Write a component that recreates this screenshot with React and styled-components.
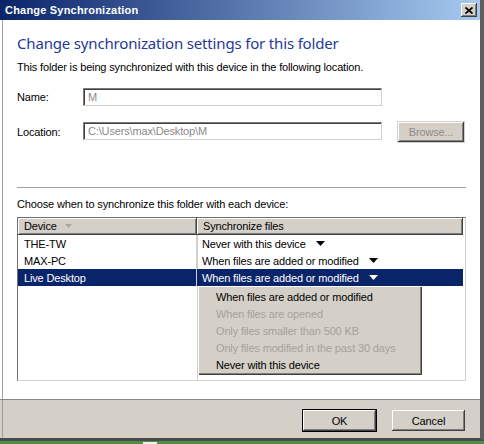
import React from 'react';
import styled, { createGlobalStyle } from 'styled-components';

const UI = `"Liberation Sans", Arial, sans-serif`;

const Global = createGlobalStyle`
  html, body { margin: 0; padding: 0; width: 484px; height: 444px; overflow: hidden; background: #4d8f45; }
  #root { width: 484px; height: 444px; }
  * { box-sizing: border-box; }
`;

const Desktop = styled.div`
  display: flex;
  flex-direction: column;
  width: 484px;
  height: 444px;
  background: #4d8f45;
`;

const Window = styled.div`
  display: flex;
  flex-direction: column;
  width: 484px;
  height: 441px;
  border-right: 4px solid #5e5e5e;
  border-bottom: 3px solid #4a4a4a;
  font-family: ${UI};
  font-size: 11px;
  letter-spacing: -0.15px;
  color: #000;
`;

const TitleBar = styled.div`
  height: 20px;
  flex: none;
  display: flex;
  align-items: center;
  justify-content: space-between;
  padding: 0 3px 0 5px;
  background: linear-gradient(to right, #0a246a, #a6caf0);
`;

const TitleText = styled.span`
  color: #fff;
  font-weight: bold;
  font-size: 11px;
  letter-spacing: 0.2px;
`;

const CloseButton = styled.div`
  width: 16px;
  height: 14px;
  background: #d4d0c8;
  display: flex;
  align-items: center;
  justify-content: center;
  box-shadow: inset -1px -1px 0 #404040, inset 1px 1px 0 #fff, inset -2px -2px 0 #808080;
`;

const Body = styled.div`
  flex: 1;
  display: flex;
  flex-direction: column;
  padding: 13px 14px 0 17px;
  background: linear-gradient(#a0a0a0, #a0a0a0) 2px 0 / 1px 100% no-repeat, #fff;
  position: relative;
`;

const Heading = styled.div`
  font-family: "Noto Sans", "Open Sans", sans-serif;
  font-size: 15px;
  line-height: 20px;
  letter-spacing: -0.17px;
  color: #1f3a99;
`;

const Text = styled.div`
  line-height: 14px;
  margin-top: ${p => p.$mt || 0}px;
`;

const FieldRow = styled.div`
  display: flex;
  align-items: ${p => p.$align || 'center'};
  height: ${p => p.$h}px;
  margin-top: ${p => p.$mt}px;
`;

const Label = styled.span`
  width: 66px;
  flex: none;
`;

const Input = styled.div`
  width: 299px;
  height: 18px;
  flex: none;
  margin-top: ${p => p.$mt || 0}px;
  padding: 0 4px;
  display: flex;
  align-items: center;
  color: #8a8a8a;
  background: #fff;
  border: 1px solid;
  border-color: #7a7a7a #d4d0c8 #d4d0c8 #7a7a7a;
  box-shadow: inset 1px 1px 0 #404040;
`;

const Button = styled.div`
  width: ${p => p.$w || 75}px;
  height: ${p => p.$h || 23}px;
  flex: none;
  display: flex;
  align-items: center;
  justify-content: center;
  background: #d4d0c8;
  color: ${p => (p.$disabled ? '#8f8b84' : '#000')};
  margin-left: ${p => p.$ml || 0}px;
  border: 1px solid ${p => (p.$default ? '#000' : 'transparent')};
  box-shadow: inset -1px -1px 0 #404040, inset 1px 1px 0 #fff, inset -2px -2px 0 #808080;
`;

const Separator = styled.div`
  height: 1px;
  background: #a0a0a0;
  margin-top: 44px;
`;

const Table = styled.div`
  margin-top: 6px;
  height: 164px;
  position: relative;
  display: flex;
  flex-direction: column;
  border: 1px solid;
  border-color: #6f6f6f #d4d0c8 #d4d0c8 #6f6f6f;
  background: linear-gradient(#d4d0c8, #d4d0c8) 179px 0 / 1px 100% no-repeat, #fff;
`;

const Grid = styled.div`
  display: grid;
  grid-template-columns: 179px 266px;
  height: ${p => p.$h || 17}px;
`;

const HeadCell = styled.div`
  display: flex;
  align-items: center;
  gap: 8px;
  padding-left: 6px;
  background: #d4d0c8;
  border-right: 1px solid #404040;
  border-bottom: 1px solid #404040;
  box-shadow: inset 1px 1px 0 #fff, inset -1px -1px 0 #808080;
`;

const Cell = styled.div`
  display: flex;
  align-items: center;
  padding-left: ${p => (p.$first ? 6 : 5)}px;
  gap: 10px;
  background: ${p => (p.$sel ? '#0a246a' : 'transparent')};
  color: ${p => (p.$sel ? '#fff' : '#000')};
  border-right: ${p => (p.$first ? '1px solid #d4d0c8' : 'none')};
  white-space: nowrap;
`;

const Menu = styled.div`
  position: absolute;
  left: 180px;
  top: 68px;
  width: 224px;
  height: 89px;
  padding: 2px 0;
  background: #d4d0c8;
  box-shadow: inset 1px 1px 0 #fff, inset -1px -1px 0 #404040, inset -2px -2px 0 #808080;
  display: flex;
  flex-direction: column;
`;

const MenuItem = styled.div`
  height: 17px;
  display: flex;
  align-items: center;
  padding-left: 18px;
  color: ${p => (p.$disabled ? '#a5a19a' : '#000')};
  white-space: nowrap;
`;

const Footer = styled.div`
  height: 39px;
  flex: none;
  display: flex;
  justify-content: flex-end;
  align-items: flex-start;
  padding: 9px 14px 0 0;
  border-top: 1px solid #888;
  background: linear-gradient(#a0a0a0, #a0a0a0) 2px 0 / 1px 100% no-repeat, #d4d0c8;
`;

const Taskbar = styled.div`
  flex: 1;
  display: flex;
  align-items: flex-end;
`;

const TaskItem = styled.div`
  margin-left: 143px;
  width: 14px;
  height: 2px;
  background: #f0f0f0;
`;

const Caret = ({ color = '#000', w = 9, h = 5 }) => (
  <svg width={w} height={h} viewBox={`0 0 ${w} ${h}`} style={{ display: 'block' }}>
    <polygon points={`0,0 ${w},0 ${w / 2},${h}`} fill={color} />
  </svg>
);

const rows = [
  { device: 'THE-TW', sync: 'Never with this device' },
  { device: 'MAX-PC', sync: 'When files are added or modified' },
  { device: 'Live Desktop', sync: 'When files are added or modified', sel: true },
];

const options = [
  { label: 'When files are added or modified' },
  { label: 'When files are opened', disabled: true },
  { label: 'Only files smaller than 500 KB', disabled: true },
  { label: 'Only files modified in the past 30 days', disabled: true },
  { label: 'Never with this device' },
];

export default function App() {
  return (
    <Desktop>
      <Global />
      <Window>
        <TitleBar>
          <TitleText>Change Synchronization</TitleText>
          <CloseButton>
            <svg width="8" height="7" viewBox="0 0 8 7">
              <path d="M0.5 0.5 L7.5 6.5 M7.5 0.5 L0.5 6.5" stroke="#000" strokeWidth="1.7" />
            </svg>
          </CloseButton>
        </TitleBar>
        <Body>
          <Heading>Change synchronization settings for this folder</Heading>
          <Text $mt={7}>This folder is being synchronized with this device in the following location.</Text>
          <FieldRow $h={18} $mt={14}>
            <Label>Name:</Label>
            <Input>M</Input>
          </FieldRow>
          <FieldRow $h={22} $mt={15} $align="flex-start">
            <Label style={{ alignSelf: 'center' }}>Location:</Label>
            <Input $mt={1}>C:\Users\max\Desktop\M</Input>
            <Button $w={68} $h={22} $ml={15} $disabled>Browse...</Button>
          </FieldRow>
          <Separator />
          <Text $mt={9}>Choose when to synchronize this folder with each device:</Text>
          <Table>
            <Grid>
              <HeadCell>
                Device
                <Caret color="#a8a8a8" w={7} h={4} />
              </HeadCell>
              <HeadCell>Synchronize files</HeadCell>
            </Grid>
            {rows.map(r => (
              <Grid key={r.device}>
                <Cell $first $sel={r.sel}>{r.device}</Cell>
                <Cell $sel={r.sel}>
                  {r.sync}
                  <Caret color={r.sel ? '#fff' : '#000'} />
                </Cell>
              </Grid>
            ))}
            <Menu>
              {options.map(o => (
                <MenuItem key={o.label} $disabled={o.disabled}>{o.label}</MenuItem>
              ))}
            </Menu>
          </Table>
        </Body>
        <Footer>
          <Button $default>OK</Button>
          <Button $ml={14}>Cancel</Button>
        </Footer>
      </Window>
      <Taskbar>
        <TaskItem />
      </Taskbar>
    </Desktop>
  );
}
